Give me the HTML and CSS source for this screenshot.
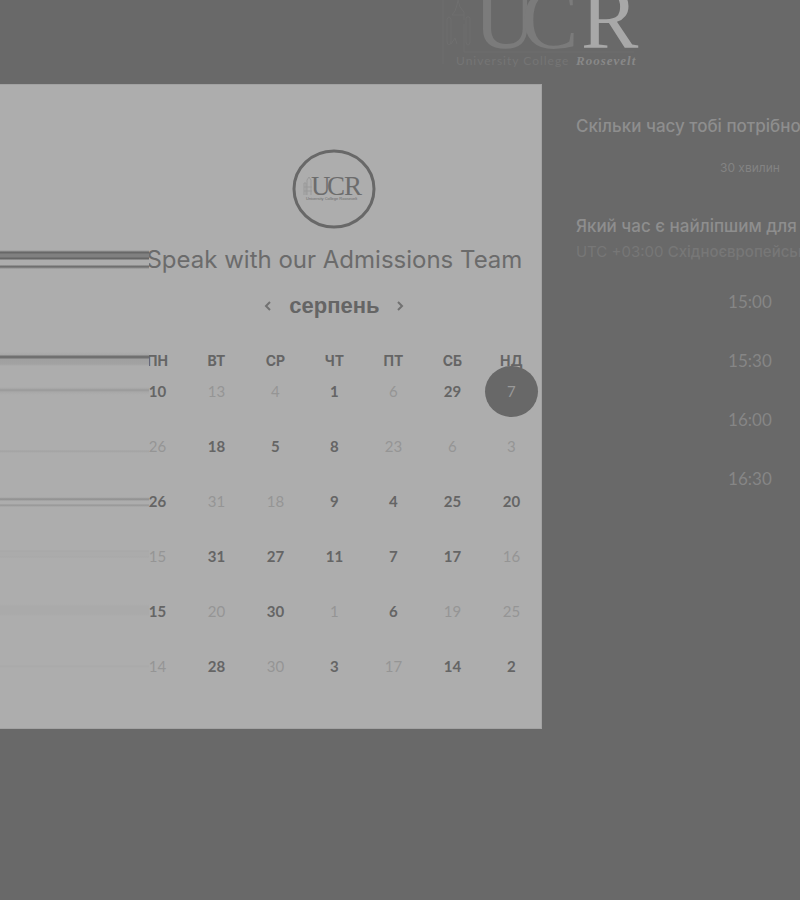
FILE: index.html
```
<!DOCTYPE html>
<html lang="uk">
<head>
<meta charset="utf-8">
<meta name="viewport" content="width=device-width, initial-scale=1">
<title>Speak with our Admissions Team</title>
<link rel="stylesheet" href="styles.css">
</head>
<body>
<header class="site-header">
  <svg class="logo" width="204" height="76" viewBox="0 0 204 76" role="img" aria-label="University College Roosevelt">
    <g class="logo-tower">
      <path d="M3 0v64M12 15l3-4 2-6 1-5M18 0l2 7 4 5v8M12 15h12M7 19v22q0 4 2 4t2-4V19q-2-4-4 0M26 18v24q0 3 2 3t2-3V18q-2-3-4 0M24 24v28M11 44l4-6 2 6"/>
      <path d="M24 52h170"/>
    </g>
    <g class="logo-letters">
      <text x="34" y="48">U</text>
      <text x="81" y="48">C</text>
      <text class="logo-bright" x="141" y="48">R</text>
    </g>
    <text class="logo-name" x="16" y="65">University College</text>
    <text class="logo-surname" x="136" y="65">Roosevelt</text>
  </svg>
</header>
<main class="scheduler">
  <section class="card">
    <div class="calendar">
      <svg class="avatar" width="84" height="80" viewBox="0 0 84 80" role="img" aria-label="UCR">
        <ellipse cx="42" cy="40" rx="40" ry="38"/>
        <path d="M12 46V34h2v12M15 46V31l2-3 2 3v15M12 38h8M12 42h8"/>
        <text class="avatar-letters" y="46"><tspan x="19">U</tspan><tspan x="35">C</tspan><tspan x="52">R</tspan></text>
        <text class="avatar-name" x="14" y="51">University College Roosevelt</text>
      </svg>
      <h1 class="title">Speak with our Admissions Team</h1>
      <div class="month">
        <button class="arrow" type="button" aria-label="Попередній місяць"><svg width="8" height="10" viewBox="0 0 8 10"><path d="M6 1L2 5l4 4"/></svg></button>
        <h2 class="month-name">серпень</h2>
        <button class="arrow" type="button" aria-label="Наступний місяць"><svg width="8" height="10" viewBox="0 0 8 10"><path d="M1 1l4 4-4 4"/></svg></button>
      </div>
      <table class="days">
        <thead><tr><th>ПН</th><th>ВТ</th><th>СР</th><th>ЧТ</th><th>ПТ</th><th>СБ</th><th>НД</th></tr></thead>
        <tbody>
          <tr><td><button>10</button></td><td><button disabled>13</button></td><td><button disabled>4</button></td><td><button>1</button></td><td><button disabled>6</button></td><td><button>29</button></td><td><button class="selected"><span>7</span></button></td></tr>
          <tr><td><button disabled>26</button></td><td><button>18</button></td><td><button>5</button></td><td><button>8</button></td><td><button disabled>23</button></td><td><button disabled>6</button></td><td><button disabled>3</button></td></tr>
          <tr><td><button>26</button></td><td><button disabled>31</button></td><td><button disabled>18</button></td><td><button>9</button></td><td><button>4</button></td><td><button>25</button></td><td><button>20</button></td></tr>
          <tr><td><button disabled>15</button></td><td><button>31</button></td><td><button>27</button></td><td><button>11</button></td><td><button>7</button></td><td><button>17</button></td><td><button disabled>16</button></td></tr>
          <tr><td><button>15</button></td><td><button disabled>20</button></td><td><button>30</button></td><td><button disabled>1</button></td><td><button>6</button></td><td><button disabled>19</button></td><td><button disabled>25</button></td></tr>
          <tr><td><button disabled>14</button></td><td><button>28</button></td><td><button disabled>30</button></td><td><button>3</button></td><td><button disabled>17</button></td><td><button>14</button></td><td><button>2</button></td></tr>
        </tbody>
      </table>
    </div>
  </section>
  <section class="options">
    <div class="options-body">
      <h2 class="question">Скільки часу тобі потрібно</h2>
      <button class="duration" type="button">30 хвилин</button>
      <h2 class="question">Який час є найліпшим для</h2>
      <p class="zone">UTC +03:00 <b>Східноєвропейськ</b></p>
      <div class="times">
        <button type="button">15:00</button>
        <button type="button">15:30</button>
        <button type="button">16:00</button>
        <button type="button">16:30</button>
      </div>
    </div>
  </section>
</main>
</body>
</html>
```
FILE: styles.css
```
* { box-sizing: border-box; }

body {
  margin: 0;
  min-height: 100vh;
  background: #696969;
  color: #656565;
  font-family: Lato, "Liberation Sans", sans-serif;
  overflow-x: hidden;
}

h1, h2, p { margin: 0; }

button {
  padding: 0;
  border: 0;
  background: none;
  color: inherit;
  font: inherit;
}

.site-header {
  height: 84px;
  padding-left: 55%;
}

.logo { display: block; }
.logo-tower { fill: none; stroke: #6f6f6f; }
.logo-letters { font: 86px "Liberation Serif", serif; fill: #7b7b7b; }
.logo-bright { fill: #a8a8a8; }
.logo-name { font: 12px Lato, sans-serif; fill: #757575; letter-spacing: 1px; }
.logo-surname { font: italic bold 13px "Liberation Serif", serif; fill: #888; letter-spacing: 1px; }

.scheduler {
  display: grid;
  grid-template-columns: 21fr 10fr;
}

.card {
  position: relative;
  display: flex;
  justify-content: flex-end;
  padding: 65px 1px 27px 0;
  background: #adadad;
  box-shadow: inset -1px -1px #a2a2a2, inset 0 1px #a2a2a2;
}

/* Horizontal streaks that run from the window edge to the calendar. */
.card::before {
  content: "";
  position: absolute;
  z-index: 1;
  inset: 0 393px 0 0;
  background: linear-gradient(
    transparent 166px, #979797 167px, #686868 168px, #686868 169px,
    #808080 170px, #808080 173px, #666 174px, #666 175px, #adadad 176px,
    #adadad 181px, #707070 182px, #707070 183px, #adadad 185px, transparent 186px,
    transparent 268px, #a6a6a6 271px, #707070 272px, #707070 274px, #a0a0a0 275px,
    #a2a2a2 280px, #adadad 282px, transparent 283px,
    transparent 303px, #a4a4a4 305px, #989898 306px, #a8a8a8 308px, transparent 311px,
    transparent 366px, #a2a2a2 367px, transparent 369px,
    transparent 413px, #a4a4a4 414px, #8d8d8d 415px, #9a9a9a 416px, #adadad 417px,
    #adadad 420px, #959595 421px, #a0a0a0 422px, transparent 423px,
    transparent 466px, #a7a7a7 467px, #ababab 468px, #ababab 472px, #a8a8a8 473px, transparent 474px,
    transparent 520px, #aaa 522px, #aaa 530px, transparent 532px,
    transparent 581px, #a9a9a9 582px, transparent 584px);
}

.calendar {
  display: flex;
  flex-direction: column;
  align-items: center;
  width: 413px;
}

.avatar { fill: none; stroke: #686868; stroke-width: 3; }
.avatar path { stroke: #999; stroke-width: 1; }
.avatar text { stroke: none; fill: #6c6c6c; }
.avatar-letters { font: 27px "Liberation Serif", serif; }
.avatar-name { font: 4px "Liberation Sans", sans-serif; }

.title {
  margin-top: 15px;
  color: #6b6b6b;
  font: 400 24px/32px Inter, sans-serif;
  white-space: nowrap;
}

.month {
  display: flex;
  align-items: center;
  gap: 17px;
  margin-top: 16px;
}

.month-name {
  font: bold 22px/28px "Liberation Sans", sans-serif;
}

.arrow { display: flex; }
.arrow svg { fill: none; stroke: #717171; stroke-width: 2; }

.days {
  width: 100%;
  margin-top: 30px;
  border-collapse: collapse;
  table-layout: fixed;
  text-align: center;
}

.days th {
  height: 22px;
  padding: 0;
  font: 700 14px/22px Inter, sans-serif;
}

.days td {
  height: 55px;
  padding: 0;
  vertical-align: top;
}

.days button {
  position: relative;
  display: block;
  width: 100%;
  height: 38px;
  font-size: 15px;
  font-weight: 700;
  line-height: 38px;
}

.days button:disabled { color: #959595; font-weight: 400; }

.days .selected { color: #999; font-weight: 400; }

.selected::before {
  content: "";
  position: absolute;
  inset: -6px 3px -7px;
  border-radius: 50%;
  background: #686868;
}

.selected span { position: relative; }

.options {
  padding: 32px 0 0 34px;
  overflow: hidden;
  white-space: nowrap;
}

.options-body {
  display: flex;
  flex-direction: column;
  min-width: 348px;
}

.question {
  color: #8e8e8e;
  font: 500 17px/20px Inter, sans-serif;
}

.duration {
  margin: 24px 0 40px;
  color: #838383;
  font: 12px/16px Inter, sans-serif;
}

.zone {
  margin-top: 8px;
  color: #777;
  font: 15px/16px Inter, sans-serif;
}

.zone b { font-weight: 500; }

.times {
  display: grid;
  grid-auto-rows: 59px;
  margin-top: 12px;
  color: #868686;
  font-size: 17px;
}
```
